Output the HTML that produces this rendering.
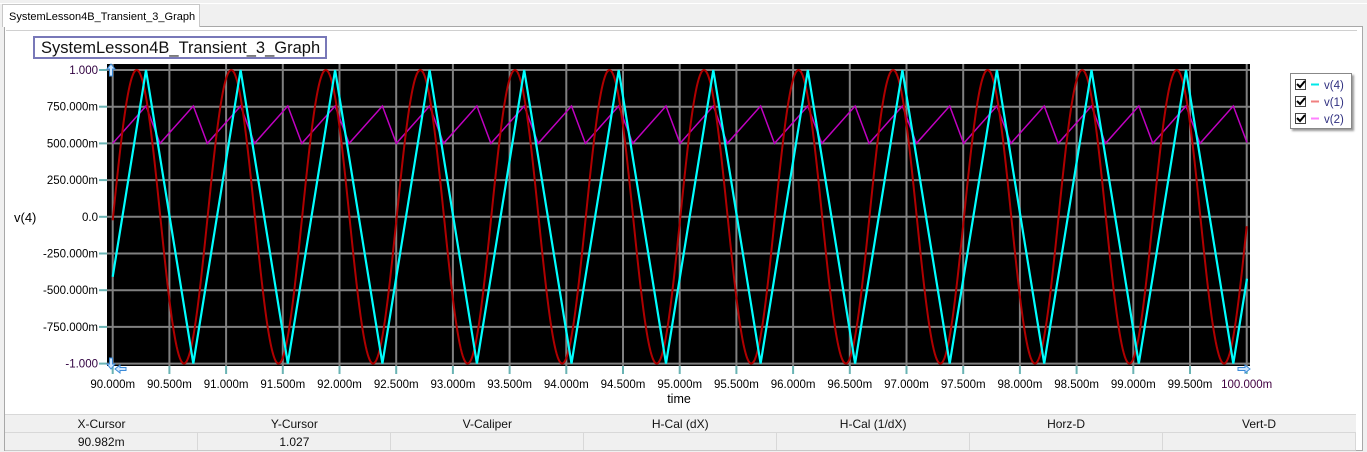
<!DOCTYPE html>
<html><head><meta charset="utf-8">
<style>
body{margin:0;width:1367px;height:452px;background:#f0f0f0;font-family:"Liberation Sans",Arial,sans-serif;position:relative;overflow:hidden}
.abs{position:absolute}
.tab{left:2px;top:4px;width:198px;height:23px;background:#fff;border:1px solid #c8c8c8;border-bottom:none;font-size:11px;line-height:24px;padding-left:6px;box-sizing:border-box;z-index:2}
.panel{left:4px;top:26px;width:1359px;height:425px;background:#fff;border:1px solid #a8a8a8;box-sizing:border-box}
.title{left:33px;top:36px;width:294px;height:23px;border:2px solid #7878b8;box-sizing:border-box;font-size:16.5px;line-height:20px;padding-left:6px;background:#fff;color:#111}
table{position:absolute;left:5px;top:414px;border-collapse:collapse;font-size:12px;width:1351px;table-layout:fixed}
td{height:17px;text-align:center;padding:0;color:#111}
tr.h td{background:#f0f0f0;border-top:1px solid #d8d8d8;border-bottom:1px solid #d8d8d8}
tr.v td{background:#f0f0f0;border-right:1px solid #d8d8d8;border-bottom:1px solid #c8c8c8}
</style></head><body>
<div class="abs" style="left:0;top:3px;width:1367px;height:1px;background:#fff"></div>
<div class="abs tab">SystemLesson4B_Transient_3_Graph</div>
<div class="abs panel"></div>
<div class="abs" style="left:6px;top:30px;width:1351px;height:1px;background:#d0d0d0"></div>
<svg class="abs" style="left:0;top:0" width="1367" height="452" id="s" font-family="Liberation Sans, Arial, sans-serif" font-size="11.5">
<rect x="107" y="64" width="1143" height="302" fill="#000"/>
<g id="grid" stroke="#808080" stroke-width="2"></g>
<g id="ticks" stroke="#6ab4b4" stroke-width="2"></g>
<g id="lab" fill="#000"></g>
<path id="c2" fill="none" stroke="#c000c0" stroke-width="1.5"/>
<path id="c1" fill="none" stroke="#b00000" stroke-width="2"/>
<path id="c4" fill="none" stroke="#00ffff" stroke-width="2.2"/>
<text x="14" y="222" font-size="13">v(4)</text>
<text x="679" y="403" font-size="12.5" text-anchor="middle">time</text>
<path d="M111 64 l4 5 h-2.5 v7 h-3 v-7 h-2.5z" fill="#cfe6ff" stroke="#3a8ad8"/>
<path d="M111 369 l4 -5 h-2.5 v-6 h-3 v6 h-2.5z" fill="#cfe6ff" stroke="#3a8ad8"/>
<path d="M115 369 l5 -4 v2.5 h6 v3 h-6 v2.5z" fill="#cfe6ff" stroke="#3a8ad8"/>
<path d="M1250 369 l-5 -4 v2.5 h-7 v3 h7 v2.5z" fill="#cfe6ff" stroke="#3a8ad8"/>
</svg>
<div class="abs title">SystemLesson4B_Transient_3_Graph</div>
<div class="abs" style="left:1290px;top:73px;width:62px;height:56px;background:#fff;border:1px solid #888;box-shadow:2px 2px 2px #999;box-sizing:border-box;font-size:11.5px">
<svg width="60" height="54">
<g stroke="#444" fill="#fff"><rect x="4.5" y="5.5" width="10" height="10"/><rect x="4.5" y="22.5" width="10" height="10"/><rect x="4.5" y="39.5" width="10" height="10"/></g>
<g stroke="#000" stroke-width="2" fill="none"><path d="M6 10 l3 3 l5 -6"/><path d="M6 27 l3 3 l5 -6"/><path d="M6 44 l3 3 l5 -6"/></g>
<line x1="20" y1="10.5" x2="28" y2="10.5" stroke="#00e8e8" stroke-width="2"/>
<line x1="20" y1="27.5" x2="28" y2="27.5" stroke="#f08080" stroke-width="2"/>
<line x1="20" y1="44.5" x2="28" y2="44.5" stroke="#ff80ff" stroke-width="2"/>
<g fill="#303080" font-family="Liberation Sans, Arial, sans-serif" font-size="11.5"><text x="33" y="15">v(4)</text><text x="33" y="32">v(1)</text><text x="33" y="49">v(2)</text></g>
</svg></div>
<table>
<tr class="h"><td>X-Cursor</td><td>Y-Cursor</td><td>V-Caliper</td><td>H-Cal (dX)</td><td>H-Cal (1/dX)</td><td>Horz-D</td><td>Vert-D</td></tr>
<tr class="v"><td>90.982m</td><td>1.027</td><td></td><td></td><td></td><td></td><td></td></tr>
</table>
<script>
var NS="http://www.w3.org/2000/svg";
function el(p,t,a,txt){var e=document.createElementNS(NS,t);for(var k in a)e.setAttribute(k,a[k]);if(txt!=null)e.textContent=txt;document.getElementById(p).appendChild(e);}
var x0=112.7,dx=56.7,y0=70,dy=36.7;
for(var i=0;i<=20;i++){var x=x0+i*dx;el('grid','line',{x1:x,y1:64,x2:x,y2:366});el('ticks','line',{x1:x,y1:366,x2:x,y2:374});
el('lab','text',{x:x,y:388,'text-anchor':'middle',fill:(i==20?'#400040':'#000')},(90+i*0.5).toFixed(3)+'m');}
var yl=['1.000','750.000m','500.000m','250.000m','0.0','-250.000m','-500.000m','-750.000m','-1.000'];
for(var j=0;j<=8;j++){var y=y0+j*dy;el('grid','line',{x1:107,y1:y,x2:1250,y2:y});el('ticks','line',{x1:99,y1:y,x2:107,y2:y});
el('lab','text',{x:98,y:y+4,'text-anchor':'end',fill:(j==0||j==8?'#300040':'#000')},yl[j]);}
var yc=y0+4*dy,A=4*dy,P=94.55;
function Y(v){return (yc-v*A).toFixed(1);}
var d1='',d4='',d2='';
for(var x=112.7;x<=1247;x+=1){var v=Math.cos(2*Math.PI*(x-136.7)/P);d1+=(d1?'L':'M')+x.toFixed(1)+' '+Y(v);}
// triangle
var pts=[];var t=146-P*1;for(;t<1260;t+=P/2)pts.push(t);
function tri(x){var ph=((x-146)%P+P)%P/P;return ph<0.5?1-4*ph:-3+4*ph;}
d4='M112.7 '+Y(tri(112.7));
for(var k=0;k<pts.length;k++){var px=pts[k];if(px>112.7&&px<1247)d4+='L'+px.toFixed(1)+' '+Y(tri(px));}
d4+='L1247 '+Y(tri(1247));
// sawtooth
var Q=P/2,rise=33.3;
function saw(x){var ph=((x-146)%Q+Q)%Q;return ph<(Q-rise)?0.755-0.255*ph/(Q-rise):0.5+0.255*(ph-(Q-rise))/rise;}
d2='M112.7 '+Y(saw(112.7));
for(var b=146-Q*2;b<1260;b+=Q){[b,b+Q-rise].forEach(function(px){if(px>112.7&&px<1247)d2+='L'+px.toFixed(1)+' '+Y(saw(px));});}
d2+='L1247 '+Y(saw(1247));
document.getElementById('c1').setAttribute('d',d1);
document.getElementById('c4').setAttribute('d',d4);
document.getElementById('c2').setAttribute('d',d2);
</script>
</body></html>
